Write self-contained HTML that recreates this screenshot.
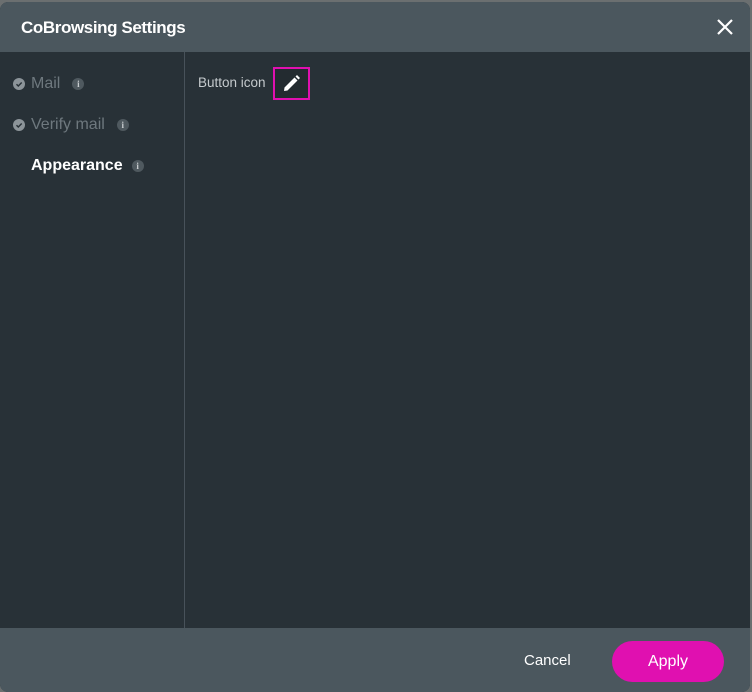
<!DOCTYPE html>
<html><head><style>
*{margin:0;padding:0;box-sizing:border-box}
body{width:752px;height:692px;background:#6b6f70;font-family:"Liberation Sans",sans-serif;overflow:hidden;position:relative}
.dlg{position:absolute;left:0;top:2px;width:750px;height:690px;border-radius:8px;overflow:hidden;background:#283137}
.hdr{height:50px;background:#4b575e;position:relative}
.hdr h1{position:absolute;left:21px;top:16px;font-size:17px;font-weight:bold;color:#fff;letter-spacing:-0.4px}
.x{position:absolute;left:716px;top:16px}
.side{position:absolute;left:0;top:50px;width:185px;height:576px;border-right:1px solid #48525a}
.it{position:absolute;left:13px;font-size:16px;color:#6e787e;display:flex;align-items:center}
.ck{width:12px;height:12px;border-radius:50%;background:#8c9499;margin-right:6px;position:relative}
.inf{width:12px;height:12px;border-radius:50%;background:#4f595f;color:#c8cdd0;font-size:9px;font-weight:bold;text-align:center;line-height:12px;margin-left:12px;font-family:"Liberation Serif",serif}
.foot{position:absolute;left:0;top:626px;width:750px;height:64px;background:#4b575e}
.cancel{position:absolute;left:524px;top:24px;color:#fff;font-size:15px}
.apply{position:absolute;left:612px;top:13px;width:112px;height:41px;border-radius:21px;background:#e010b0;color:#fff;font-size:16px;text-align:center;line-height:41px}
</style></head><body>
<div class="dlg">
<div class="hdr"><h1>CoBrowsing Settings</h1>
<svg class="x" width="18" height="18" viewBox="0 0 18 18"><path d="M2 2L16 16M16 2L2 16" stroke="#fff" stroke-width="2.2"/></svg></div>
<div class="side">
<div class="it" style="top:23px"><span class="ck"><svg width="12" height="12" style="position:absolute;left:0;top:0"><path d="M3.5 6.2L5.3 8L8.7 4.5" stroke="#283137" stroke-width="1.4" fill="none"/></svg></span>Mail<span class="inf">i</span></div>
<div class="it" style="top:64px"><span class="ck"><svg width="12" height="12" style="position:absolute;left:0;top:0"><path d="M3.5 6.2L5.3 8L8.7 4.5" stroke="#283137" stroke-width="1.4" fill="none"/></svg></span>Verify mail<span class="inf">i</span></div>
<div class="it" style="top:105px;left:31px;color:#fff;font-weight:bold">Appearance<span class="inf" style="margin-left:9px">i</span></div>
</div>
<div style="position:absolute;left:198px;top:73px;font-size:13.5px;color:#c5cacd">Button icon</div>
<div style="position:absolute;left:273px;top:65px;width:37px;height:33px;border:2px solid #e010b0;background:#232b30">
<svg width="33" height="29" viewBox="0 0 33 29"><path d="M9 22L9.5 18.5L19.5 8.5L22.5 11.5L12.5 21.5Z M20.5 7.5L22 6L25 9L23.5 10.5Z" fill="#fff"/></svg></div>
<div class="foot"><span class="cancel">Cancel</span><div class="apply">Apply</div></div>
</div>
</body></html>
